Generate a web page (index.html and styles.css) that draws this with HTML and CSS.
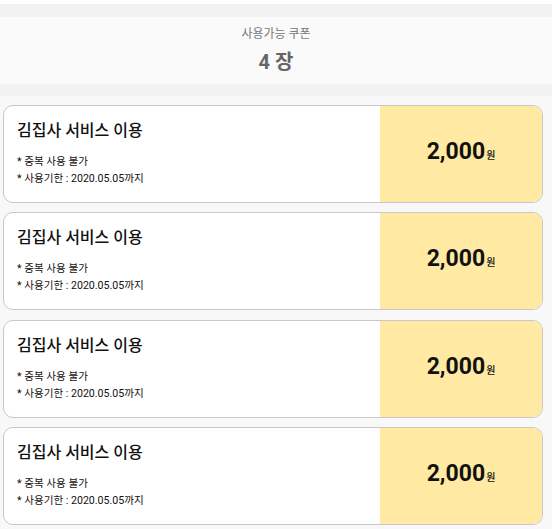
FILE: index.html
```html
<!DOCTYPE html>
<html lang="ko">
<head>
    <meta charset="UTF-8">
    <meta name="viewport" content="width=device-width, initial-scale=1.0">
    <title>쿠폰</title>
    <link rel="stylesheet" href="styles.css">
</head>
<body>
    <div class="coupon-header">
        <p class="coupon-label">사용가능 쿠폰</p>
        <h1 class="coupon-count">4 장</h1>
    </div>

    <div class="coupon-list">
        <div class="coupon">
            <div class="coupon-info">
                <h2>김집사 서비스 이용</h2>
                <p>* 중복 사용 불가</p>
                <p>* 사용기한 : 2020.05.05까지</p>
            </div>
            <div class="coupon-price">2,000<span>원</span></div>
        </div>
        <div class="coupon">
            <div class="coupon-info">
                <h2>김집사 서비스 이용</h2>
                <p>* 중복 사용 불가</p>
                <p>* 사용기한 : 2020.05.05까지</p>
            </div>
            <div class="coupon-price">2,000<span>원</span></div>
        </div>
        <div class="coupon">
            <div class="coupon-info">
                <h2>김집사 서비스 이용</h2>
                <p>* 중복 사용 불가</p>
                <p>* 사용기한 : 2020.05.05까지</p>
            </div>
            <div class="coupon-price">2,000<span>원</span></div>
        </div>
        <div class="coupon">
            <div class="coupon-info">
                <h2>김집사 서비스 이용</h2>
                <p>* 중복 사용 불가</p>
                <p>* 사용기한 : 2020.05.05까지</p>
            </div>
            <div class="coupon-price">2,000<span>원</span></div>
        </div>
    </div>
</body>
</html>
```

FILE: styles.css
```css
* {
    margin: 0;
    padding: 0;
    box-sizing: border-box;
}

body {
    font-family: Roboto, "Noto Sans CJK KR", sans-serif;
    background: #f8f8f8;
    min-height: 100vh;
    border-top: 4px solid #fff;
}

.coupon-header {
    border-top: 13px solid #f2f2f2;
    border-bottom: 12px solid #f2f2f2;
    background: #fafafa;
    height: 92px;
    text-align: center;
    padding-top: 8px;
}

.coupon-label {
    font-size: 12px;
    color: #777;
    line-height: 18px;
}

.coupon-count {
    font-size: 20px;
    font-weight: 700;
    color: #666;
    line-height: 26px;
    margin-top: 6px;
}

.coupon-list {
    display: flex;
    flex-direction: column;
    gap: 9.33px;
    padding: 9px 9px 0 3px;
}

.coupon {
    display: flex;
    height: 98px;
    border: 1px solid #c8c8c8;
    border-radius: 10px;
    background: #fff;
    overflow: hidden;
}

.coupon-info {
    flex: 1;
    padding: 13px 0 0 13px;
    color: #111;
}

.coupon-info h2 {
    font-size: 16px;
    font-weight: 500;
    line-height: 24px;
    margin-bottom: 10px;
}

.coupon-info p {
    font-size: 10.6px;
    line-height: 17px;
}

.coupon-price {
    width: 162px;
    background: #ffe9a3;
    display: flex;
    align-items: baseline;
    justify-content: center;
    padding-top: 34px;
    font-size: 23px;
    font-weight: 700;
    line-height: 24px;
    color: #111;
}

.coupon-price span {
    font-size: 10px;
    font-weight: 500;
    margin-left: 1px;
}
```
